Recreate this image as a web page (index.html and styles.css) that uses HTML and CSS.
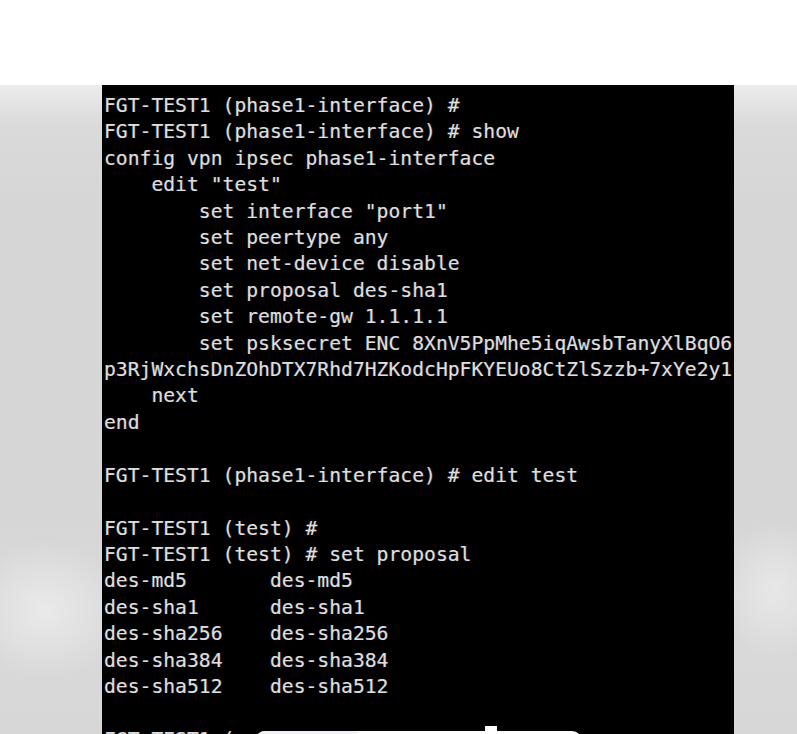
FILE: index.html
```html
<!DOCTYPE html>
<html>
<head>
<meta charset="utf-8">
<link rel="stylesheet" href="styles.css">
</head>
<body>
<div class="top"></div>
<div class="stage">
  <div class="terminal">
<pre class="screen">FGT-TEST1 (phase1-interface) #
FGT-TEST1 (phase1-interface) # show
config vpn ipsec phase1-interface
    edit "test"
        set interface "port1"
        set peertype any
        set net-device disable
        set proposal des-sha1
        set remote-gw 1.1.1.1
        set psksecret ENC 8XnV5PpMhe5iqAwsbTanyXlBqO6
p3RjWxchsDnZOhDTX7Rhd7HZKodcHpFKYEUo8CtZlSzzb+7xYe2y1
    next
end

FGT-TEST1 (phase1-interface) # edit test

FGT-TEST1 (test) #
FGT-TEST1 (test) # set proposal
des-md5       des-md5
des-sha1      des-sha1
des-sha256    des-sha256
des-sha384    des-sha384
des-sha512    des-sha512

FGT-TEST1 (</pre>
  </div>
  <div class="pill"><span class="pill-left"></span></div>
  <div class="pill-tick"></div>
</div>
</body>
</html>
```
FILE: styles.css
```css
html, body {
  margin: 0;
  padding: 0;
  background: #ffffff;
  overflow: hidden;
}
.top {
  height: 85px;
  background: #ffffff;
}
.stage {
  position: relative;
  height: 649px;
  overflow: hidden;
  background:
    radial-gradient(ellipse 75px 70px at 45px 525px, rgba(235,235,235,0.9), rgba(235,235,235,0) 100%),
    radial-gradient(ellipse 55px 70px at 775px 505px, rgba(233,233,233,0.9), rgba(233,233,233,0) 100%),
    linear-gradient(to bottom, #ececec 0px, #dadada 40px, #d6d6d6 120px, #d6d6d6 430px, #dadada 520px, #d7d7d7 649px);
}
.terminal {
  margin-left: 102px;
  width: 632px;
  height: 649px;
  background: #000000;
  overflow: hidden;
}
.screen {
  margin: 0;
  padding: 8px 0 0 2px;
  font-family: "DejaVu Sans Mono", "Liberation Mono", monospace;
  font-size: 19.7px;
  line-height: 26.4px;
  color: #dedede;
  white-space: pre;
  text-shadow: -0.6px 0 0 rgba(90,200,255,0.3), 0.6px 0 0 rgba(255,140,120,0.3);
}
.pill {
  position: absolute;
  left: 255px;
  top: 646px;
  width: 327px;
  height: 20px;
  border-radius: 10px;
  background: #ffffff;
  overflow: hidden;
}
.pill-left {
  display: block;
  width: 103px;
  height: 100%;
  background: #f1f1f6;
}
.pill-tick {
  position: absolute;
  left: 485px;
  top: 641px;
  width: 12px;
  height: 5px;
  background: #ffffff;
}
```
